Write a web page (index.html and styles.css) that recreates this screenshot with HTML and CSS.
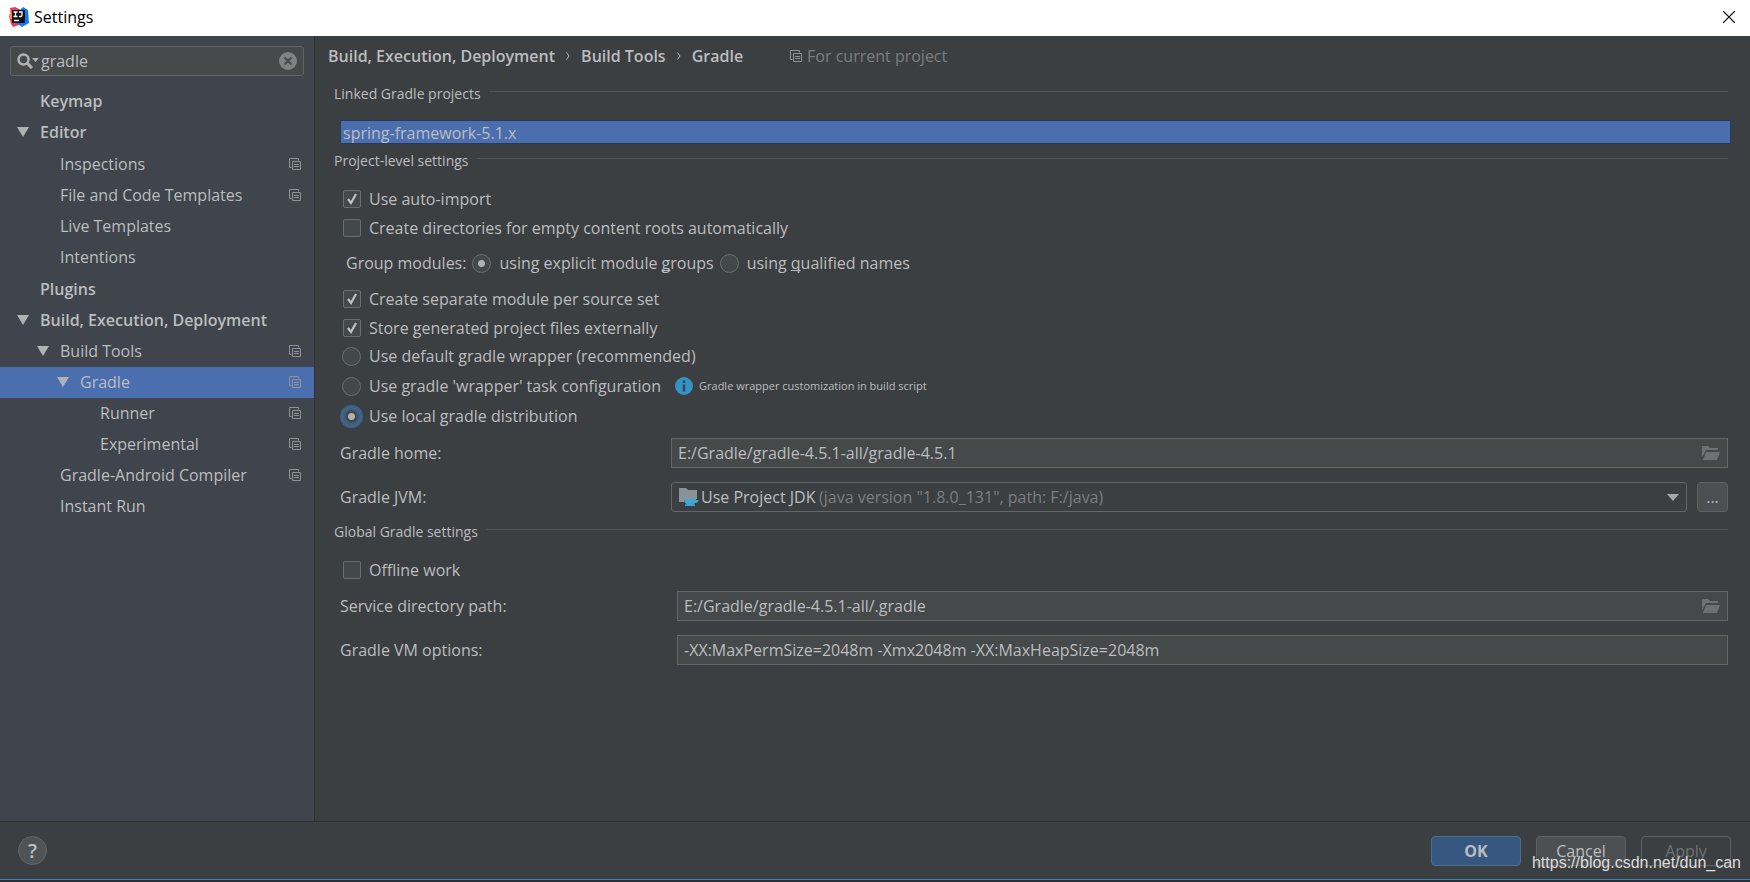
FILE: index.html
```html
<!DOCTYPE html>
<html lang="en">
<head>
<meta charset="utf-8">
<title>Settings</title>
<link rel="stylesheet" href="styles.css">
</head>
<body>
<svg class="defs" aria-hidden="true">
  <symbol id="copy" viewBox="0 0 12 12"><path d="M2.5 9.5h-2v-9h9v2M3.5 3.5h8v8h-8zM5 6.5h5M5 8.5h5" fill="none" stroke="currentColor"/></symbol>
  <symbol id="arrow" viewBox="0 0 12 10"><path d="M0 0h12L6 10z" fill="currentColor"/></symbol>
  <symbol id="folder" viewBox="0 0 18 14"><path d="M0 11V0h6l2 2h8v2H4L2 8zM4 6h14l-3 8H1z" fill="currentColor"/></symbol>
</svg>
<div class="window">
  <header class="titlebar">
    <svg class="logo" viewBox="0 0 20 20" aria-hidden="true"><path d="M1 1l5-1 6 3-3 6-7 1z" fill="#f0386b"/><path d="M0 9l5-3 5 12-6 2-2-3z" fill="#f0386b"/><path d="M0 7l5-2v6l-4 1z" fill="#f58a3c"/><path d="M11 3l3-3 5 3 1 13-7 4-6-4z" fill="#087cfa"/><path d="M3 3h13v13H3z" fill="#101010"/><path d="M4.500 5h4M6.500 5v4.500M4.500 9.500h4M10 5h3v3q0 1.500-1.500 1.500H10M5 13.500h5" stroke="#fff" stroke-width="1.300" fill="none"/></svg>
    <h1 class="title">Settings</h1>
    <button class="close" aria-label="Close"><svg viewBox="0 0 12 12"><path d="M0 0l12 12M12 0L0 12" stroke="#000" stroke-width="1.200"/></svg></button>
  </header>
  <div class="body">
    <aside class="sidebar">
      <div class="search">
        <svg class="lens" viewBox="0 0 22 16" aria-hidden="true"><circle cx="6.500" cy="6.500" r="5" fill="none" stroke="currentColor" stroke-width="2.500"/><path d="M10 10l5 5" stroke="currentColor" stroke-width="3"/><path d="M15 5h7l-3.500 4z" fill="currentColor"/></svg>
        <input type="text" value="gradle" aria-label="Search settings">
        <button class="clear" aria-label="Clear"><svg viewBox="0 0 18 18"><circle cx="9" cy="9" r="9" fill="#7f8284"/><path d="M5.500 5.500l7 7M12.500 5.500l-7 7" stroke="#45494a" stroke-width="2"/></svg></button>
      </div>
      <nav class="tree" aria-label="Settings pages">
        <a href="#" class="row top">Keymap</a>
        <a href="#" class="row top"><svg class="arrow"><use href="#arrow"/></svg>Editor</a>
        <div class="group">
          <a href="#" class="row l1">Inspections<svg class="copy"><use href="#copy"/></svg></a>
          <a href="#" class="row l1">File and Code Templates<svg class="copy"><use href="#copy"/></svg></a>
          <a href="#" class="row l1">Live Templates</a>
          <a href="#" class="row l1">Intentions</a>
        </div>
        <div class="group">
          <a href="#" class="row top">Plugins</a>
          <a href="#" class="row top"><svg class="arrow"><use href="#arrow"/></svg>Build, Execution, Deployment</a>
          <a href="#" class="row l1"><svg class="arrow"><use href="#arrow"/></svg>Build Tools<svg class="copy"><use href="#copy"/></svg></a>
          <a href="#" class="row l2 selected" aria-current="page"><svg class="arrow"><use href="#arrow"/></svg>Gradle<svg class="copy"><use href="#copy"/></svg></a>
          <a href="#" class="row l3">Runner<svg class="copy"><use href="#copy"/></svg></a>
          <a href="#" class="row l3">Experimental<svg class="copy"><use href="#copy"/></svg></a>
          <a href="#" class="row l1">Gradle-Android Compiler<svg class="copy"><use href="#copy"/></svg></a>
          <a href="#" class="row l1">Instant Run</a>
        </div>
      </nav>
    </aside>
    <main class="content">
      <div class="crumbs">
        <a href="#">Build, Execution, Deployment</a><svg class="chev" viewBox="0 0 4 8"><path d="M.5.5L3 4 .5 7.500" fill="none" stroke="currentColor"/></svg><a href="#">Build Tools</a><svg class="chev" viewBox="0 0 4 8"><path d="M.5.5L3 4 .5 7.500" fill="none" stroke="currentColor"/></svg><span>Gradle</span>
        <span class="scope"><svg class="copy"><use href="#copy"/></svg>For current project</span>
      </div>
      <h2 class="section">Linked Gradle projects</h2>
      <ul class="projects"><li>spring-framework-5.1.x</li></ul>
      <h2 class="section">Project-level settings</h2>
      <div class="options first">
        <label class="option"><input type="checkbox" checked>Use auto-import</label>
        <label class="option"><input type="checkbox">Create directories for empty content roots automatically</label>
      </div>
      <div class="modules" role="radiogroup" aria-labelledby="gm">
        <span id="gm">Group modules:</span>
        <label class="option"><input type="radio" name="group" checked><span>using explicit module <u>g</u>roups</span></label>
        <label class="option"><input type="radio" name="group"><span>using <u>q</u>ualified names</span></label>
      </div>
      <div class="options">
        <label class="option"><input type="checkbox" checked>Create separate module per source set</label>
        <label class="option"><input type="checkbox" checked>Store generated project files externally</label>
      </div>
      <div class="options wide">
        <label class="option"><input type="radio" name="dist">Use default gradle wrapper (recommended)</label>
        <div class="with-hint">
          <label class="option"><input type="radio" name="dist">Use gradle 'wrapper' task configuration</label>
          <span class="hint"><svg viewBox="0 0 18 18" aria-hidden="true"><circle cx="9" cy="9" r="9" fill="#3592c4"/><path d="M9 3.500v2.500M9 7.500v7" stroke="#2f4858" stroke-width="2.500"/></svg>Gradle wrapper customization in build script</span>
        </div>
        <label class="option"><input type="radio" name="dist" class="focus" checked>Use local gradle distribution</label>
      </div>
      <div class="fields">
        <label for="home">Gradle home:</label>
        <div class="field"><input id="home" type="text" value="E:/Gradle/gradle-4.5.1-all/gradle-4.5.1"><button class="browse" aria-label="Browse"><svg><use href="#folder"/></svg></button></div>
        <label for="jvm">Gradle JVM:</label>
        <div class="jvm">
          <div class="combo">
            <select id="jvm"><option>Use Project JDK</option></select>
            <span class="detail">(java version "1.8.0_131", path: F:/java)</span>
            <svg class="jdk" viewBox="0 0 20 18" aria-hidden="true"><path d="M0 0h7l2 2h9v9H5v3H0z" fill="#8b9297"/><path d="M5 11h12v1h2.500q0 3-3.500 3-1 1-2 1.500h2V18H6v-1.500h2Q5 15 5 11z" fill="#40a5d0"/></svg>
            <svg class="down" viewBox="0 0 12 7" aria-hidden="true"><path d="M0 0h12L6 7z" fill="#a5a8aa"/></svg>
          </div>
          <button class="more">...</button>
        </div>
      </div>
      <h2 class="section">Global Gradle settings</h2>
      <div class="options first"><label class="option"><input type="checkbox">Offline work</label></div>
      <div class="fields global">
        <label for="dir">Service directory path:</label>
        <div class="field"><input id="dir" type="text" value="E:/Gradle/gradle-4.5.1-all/.gradle"><button class="browse" aria-label="Browse"><svg><use href="#folder"/></svg></button></div>
        <label for="vm">Gradle VM options:</label>
        <div class="field"><input id="vm" type="text" value="-XX:MaxPermSize=2048m -Xmx2048m -XX:MaxHeapSize=2048m"></div>
      </div>
    </main>
  </div>
  <footer class="footer">
    <button class="help" aria-label="Help">?</button>
    <div class="actions"><button class="btn ok">OK</button><button class="btn">Cancel</button><button class="btn apply" disabled>Apply</button></div>
    <span class="watermark">https://blog.csdn.net/dun_can</span>
  </footer>
  <div class="taskbar"></div>
</div>
</body>
</html>
```
FILE: styles.css
```css
* { box-sizing: border-box; }
body { margin: 0; background: #3c3f41; color: #bbbdbf; font: 16px/22px "Open Sans", "Noto Sans", sans-serif; }
button, input, select { font: inherit; color: inherit; margin: 0; }
button { padding: 0; border: 0; background: none; }
a { color: inherit; text-decoration: none; }
u { text-decoration-skip-ink: none; }
svg { display: block; flex: none; }
.defs { position: absolute; width: 0; height: 0; }
.window { display: flex; flex-direction: column; min-height: 100vh; }

.titlebar { display: flex; align-items: center; height: 36px; padding: 0 15px 2px 9px; background: #fff; color: #000; }
.logo { width: 20px; height: 20px; margin-right: 5px; }
.title { margin: 0; flex: 1; font-size: 16px; font-weight: 400; }
.close svg { width: 12px; height: 12px; }

.body { display: flex; flex: 1; }
.sidebar { width: 315px; flex: none; background: #40444c; border-right: 1px solid #2f3234; }
.search { display: flex; align-items: center; height: 30px; margin: 10px 10px 10px; padding: 0 6px; background: #45494a; border: 1px solid #646464; border-radius: 3px; }
.lens { width: 22px; height: 16px; color: #afb1b3; }
.search input { flex: 1; min-width: 0; padding: 0 2px; border: 0; background: none; outline: 0; }
.clear svg { width: 18px; height: 18px; }
.row { display: flex; align-items: center; height: 31px; padding: 0 13px 2px 60px; }
.group { padding-top: 1px; }
.top { padding-left: 40px; font-weight: 600; }
.l2 { padding-left: 80px; }
.l3 { padding-left: 100px; }
.selected { background: #4b6eaf; }
.arrow { width: 12px; height: 10px; margin: 0 11px 0 -23px; color: #afb1b3; }
.copy { width: 12px; height: 12px; color: #8f9396; }
.row .copy { margin-left: auto; }

.content { flex: 1; min-width: 0; padding: 9px 22px 20px 13px; }
.crumbs { display: flex; align-items: center; font-weight: 600; }
.chev { width: 4px; height: 8px; margin: 0 11px; }
.scope { display: flex; align-items: center; gap: 5px; margin-left: 47px; color: #7b7e80; font-weight: 400; }
.section { display: flex; align-items: center; gap: 8px; margin: 17px 0 0 6px; font-size: 14px; line-height: 20px; font-weight: 400; }
.section::after { content: ""; flex: 1; height: 1px; margin-bottom: 5px; background: #515557; }
.projects { list-style: none; margin: 16px -3px 0 12px; padding: 1px 2px 0; height: 24px; background: #4b6eaf; border: 1px solid #263a5e; line-height: 22px; }
.projects + .section { margin-top: 7px; }

.options { display: flex; flex-direction: column; align-items: flex-start; gap: 7px; margin-left: 15px; }
.first { margin-top: 17px; }
.wide { gap: 8px; margin-top: 6px; }
.option { display: flex; align-items: center; gap: 8px; }
.option input { appearance: none; flex: none; width: 18px; height: 18px; background: #43494a center no-repeat; border: 1px solid #6b6e70; border-radius: 2px; }
.option input[type=radio] { border-radius: 50%; width: 19px; height: 19px; margin: 0 0 0 -1px; }
.option input[type=checkbox]:checked { background-image: url("data:image/svg+xml,%3Csvg xmlns='http://www.w3.org/2000/svg' width='14' height='14'%3E%3Cpath d='M3 7l3 4 5-9' fill='none' stroke='%23c0c2c4' stroke-width='2.200'/%3E%3C/svg%3E"); }
.option input[type=radio]:checked { background-image: radial-gradient(circle, #afb1b3 3px, transparent 4px); }
.option .focus { border-color: #466d94; box-shadow: 0 0 0 2px #3d6185, inset 0 0 0 2px #3d6185; }
.modules { display: flex; align-items: center; gap: 7px; margin: 13px 0 14px 18px; }
.with-hint { display: flex; align-items: center; gap: 14px; }
.hint { display: flex; align-items: center; gap: 6px; font-size: 11px; }
.hint svg { width: 18px; height: 18px; }

.fields { display: grid; grid-template-columns: 331px 1fr; row-gap: 14px; align-items: center; margin: 11px 0 0 12px; }
.fields.global { grid-template-columns: 337px 1fr; margin-top: 10px; }
.fields + .section { margin-top: 10px; }
.field { display: flex; align-items: center; height: 30px; padding-right: 7px; background: #45494a; border: 1px solid #646668; }
.field input { flex: 1; min-width: 0; padding: 0 6px; border: 0; background: none; outline: 0; }
.browse svg { width: 18px; height: 14px; color: #6e7173; }
.jvm { display: flex; gap: 10px; }
.combo { display: grid; flex: 1; align-items: center; }
.combo > * { grid-area: 1 / 1; pointer-events: none; }
.combo select { appearance: none; width: 100%; height: 30px; padding: 0 29px; background: #3c3f41; border: 1px solid #646668; border-radius: 3px; pointer-events: auto; }
.detail { padding-left: 148px; color: #7b7e80; }
.jdk { width: 20px; height: 18px; margin-left: 8px; }
.down { width: 12px; height: 7px; justify-self: end; margin-right: 8px; }
.more { width: 31px; height: 30px; background: #4c5052; border: 1px solid #5e6162; border-radius: 4px; }

.footer { position: relative; display: flex; align-items: center; justify-content: space-between; height: 58px; padding: 0 19px 0 18px; border-top: 1px solid #2f3234; }
.help { width: 29px; height: 29px; border: 1px solid #636668; border-radius: 50%; background: #4f5355; font-size: 20px; font-weight: 600; }
.actions { display: flex; gap: 15px; }
.btn { width: 90px; height: 30px; border: 1px solid #5e6162; border-radius: 4px; background: #4c5052; }
.ok { background: #365880; border-color: #4c708c; font-weight: 700; }
.apply { background: none; color: #6f7274; }
.watermark { position: absolute; right: 9px; bottom: 5px; color: #dcdcdc; font: 16px/22px "Liberation Sans", Arial, sans-serif; pointer-events: none; }
.taskbar { height: 3px; border-top: 1px solid #3d83b5; background: #25303a; }
```
